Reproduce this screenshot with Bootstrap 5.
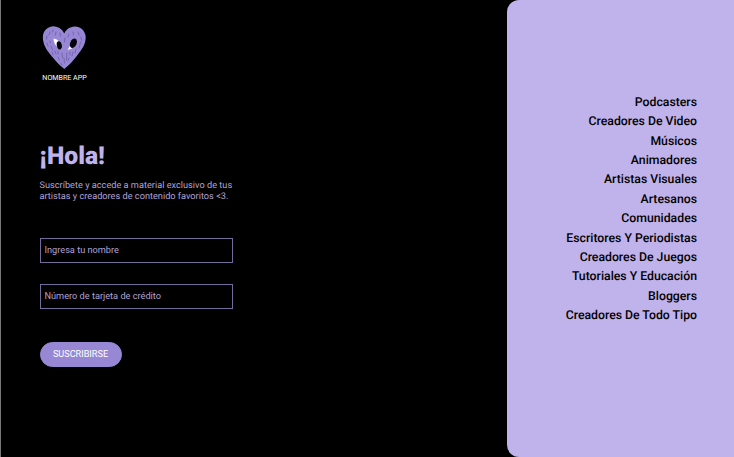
<!DOCTYPE html>
<html lang="es">
<head>
<meta charset="utf-8">
<meta name="viewport" content="width=device-width, initial-scale=1">
<title>Nombre App</title>
<link href="https://cdn.jsdelivr.net/npm/bootstrap@5.3.0/dist/css/bootstrap.min.css" rel="stylesheet">
<style>
body{font-family:Roboto,"Liberation Sans",sans-serif;background:#000;color:#c0b2ea;text-rendering:geometricPrecision}
.page{height:457px;border-left:1px solid #777}
.content{padding:26px 0 0 38.5px}
.brand{width:50px;height:56px;font-size:7.1px;line-height:9px;color:#fff;white-space:nowrap}
.brand svg{width:45px;height:44px;margin-bottom:3px;flex-shrink:0}
.hello{font-size:24.7px;font-weight:900;line-height:30px;margin:60px 0 0}
.intro{font-size:9.2px;line-height:11px;margin:7.5px 0 0;white-space:nowrap;color:#b0a3d8}
.field{width:193px;height:25px;min-height:0;padding:0 4px 2px;font-size:9.2px;line-height:21px;border-radius:0}
.field,.field:focus{background:#000;border:1px solid #756b9b;color:#b0a3d8}
.field::placeholder{color:#b0a3d8;opacity:1}
.name-field{margin-top:36.5px}
.card-field{margin-top:21px}
.subscribe{width:82px;height:25px;margin-top:33px;padding:0;font-size:9.15px;line-height:23px}
.subscribe,.subscribe:hover{background:#9787d5;border-color:#9787d5;color:#fff}
.side{width:227px;background:#c0b2ea;border-radius:12px 0 0 12px;padding:93px 37px 0 0}
.side a{font-size:12.25px;font-weight:500;line-height:19.36px;color:#000;white-space:nowrap}
</style>
<script src="https://cdn.jsdelivr.net/npm/bootstrap@5.3.0/dist/js/bootstrap.bundle.min.js"></script>
</head>
<body>
<div class="page d-flex justify-content-between overflow-hidden">
<main class="content d-flex flex-column align-items-start">
<div class="brand d-flex flex-column align-items-center">
<svg viewBox="0 0 45 44" aria-hidden="true">
<path d="M22.3 43C17 39 11 32 6 25.5C2 20 .4 14 1 9.5C2 3.500 7 0 12.500.4C17 .8 20.500 3.500 22.300 7.500C24 3.500 28 .8 32.500.5C38 .2 42.500 4 43.500 9.500C44.300 14.500 42.300 20 38.500 25C33.500 32 27.500 39 22.300 43Z" fill="#9787d5"/>
<path d="M11.500 12.500C14 12.800 16.500 14 18 17L20 23.500L15 20.500C12.800 19 11.800 16 11.500 12.500ZM30 16L25.600 24L30 22.500Z" fill="#fff"/>
<ellipse cx="17.300" cy="19.300" rx="2.500" ry="4.200" transform="rotate(-12 17.300 19.300)" fill="#050408"/>
<ellipse cx="31.400" cy="17.200" rx="3.200" ry="5" transform="rotate(24 31.400 17.200)" fill="#050408"/>
<path d="M5 10l-.5 3M8 6l-1 3M11 4l-.5 2M14 6l-.7 3M18 7l.5 3M5 17l1 3M9 20l1.500 4M10 26l1 3M13 25l1 3M16 25v3M16 31l1.500 3M20 27l.5 5M22 32l.5 5M25 27l-.5 7M28 26v3M31 26l-1 4M34 23l-1 4M27 32l-1 3M38 19l-1 3M39 11l.5 3M36 6l1 3M31 6l.5 3M27 8l-1 3M23 12l-.5 4M39 16l-1 2M19 37l1 2M8 15l.5 2" fill="none" stroke="#62539a" stroke-width=".65" stroke-linecap="round"/>
</svg>
<span>NOMBRE APP</span>
</div>
<h1 class="hello">¡Hola!</h1>
<p class="intro">Suscríbete y accede a material exclusivo de tus<br>artistas y creadores de contenido favoritos &lt;3.</p>
<input class="form-control field name-field" type="text" placeholder="Ingresa tu nombre" aria-label="Ingresa tu nombre">
<input class="form-control field card-field" type="text" placeholder="Número de tarjeta de crédito" aria-label="Número de tarjeta de crédito">
<button class="btn rounded-pill subscribe" type="button">SUSCRIBIRSE</button>
</main>
<nav class="side d-flex flex-column align-items-end flex-shrink-0">
<a class="text-decoration-none" href="#">Podcasters</a>
<a class="text-decoration-none" href="#">Creadores De Video</a>
<a class="text-decoration-none" href="#">Músicos</a>
<a class="text-decoration-none" href="#">Animadores</a>
<a class="text-decoration-none" href="#">Artistas Visuales</a>
<a class="text-decoration-none" href="#">Artesanos</a>
<a class="text-decoration-none" href="#">Comunidades</a>
<a class="text-decoration-none" href="#">Escritores Y Periodistas</a>
<a class="text-decoration-none" href="#">Creadores De Juegos</a>
<a class="text-decoration-none" href="#">Tutoriales Y Educación</a>
<a class="text-decoration-none" href="#">Bloggers</a>
<a class="text-decoration-none" href="#">Creadores De Todo Tipo</a>
</nav>
</div>
</body>
</html>
